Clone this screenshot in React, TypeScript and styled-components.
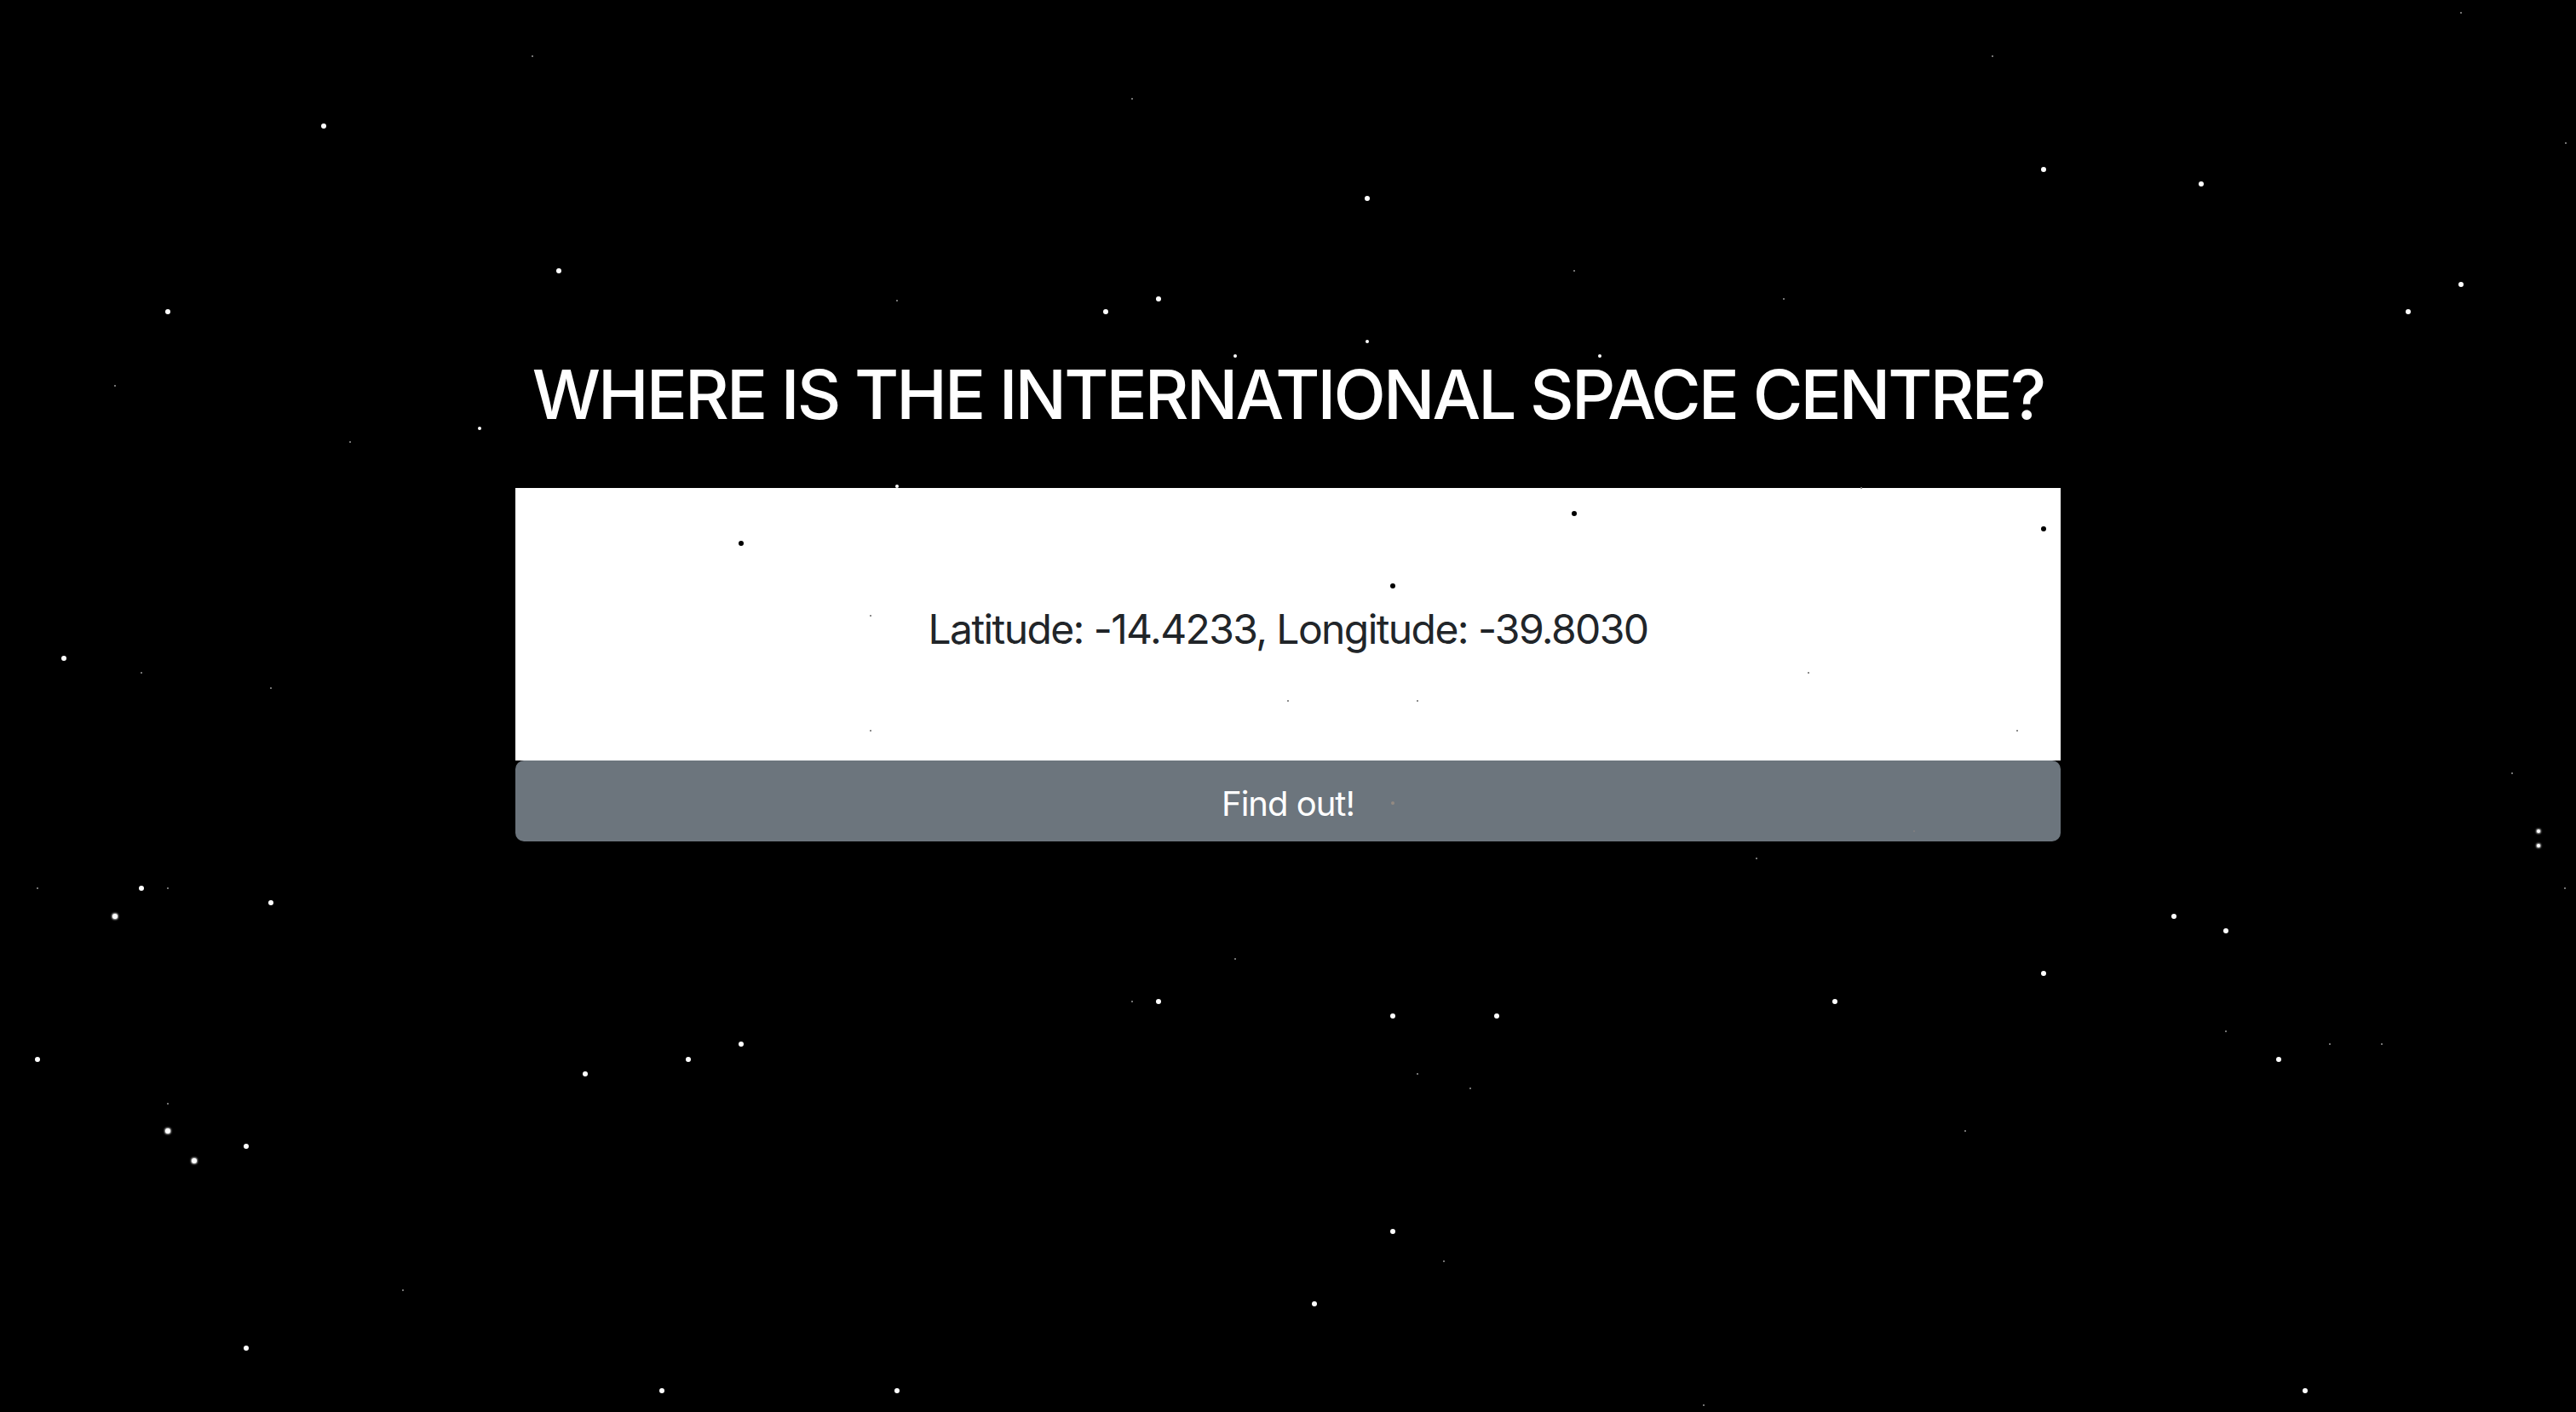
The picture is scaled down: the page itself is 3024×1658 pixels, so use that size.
import React from "react";
import styled, { createGlobalStyle } from "styled-components";

const GlobalStyle = createGlobalStyle`
  html, body {
    margin: 0;
    padding: 0;
    background: #000;
  }
  body {
    font-family: Inter, "Liberation Sans", Arial, sans-serif;
    -webkit-font-smoothing: antialiased;
  }
`;

const Page = styled.main`
  min-height: 100vh;
  box-sizing: border-box;
  display: flex;
  flex-direction: column;
  align-items: center;
  padding-top: 415px;
  background: #000;
`;

const Title = styled.h1`
  margin: 0 0 62px;
  font-size: 80px;
  line-height: 96px;
  font-weight: 500;
  color: #fff;
  text-align: center;
  letter-spacing: -2.9px;
`;

const Panel = styled.section`
  width: 60%;
  display: flex;
  flex-direction: column;
`;

const Card = styled.div`
  height: 320px;
  background: #fff;
  display: flex;
  align-items: center;
  justify-content: center;
`;

const Coordinates = styled.p`
  margin: 0;
  padding-top: 10px;
  font-size: 48px;
  font-weight: 400;
  color: #212529;
  letter-spacing: -1.6px;
`;

const FindButton = styled.button`
  height: 95px;
  padding: 6px 0 0;
  border: none;
  border-radius: 10px;
  background: #6c757d;
  color: #fff;
  font-family: inherit;
  font-size: 40px;
  font-weight: 400;
  letter-spacing: -1px;
  cursor: pointer;
`;

const Sky = styled.div`
  position: fixed;
  inset: 0;
  pointer-events: none;
  mix-blend-mode: difference;
  z-index: 2;
`;

type StarSize = "b" | "m" | "t";

const Star = styled.span<{ $size: StarSize; $soft?: boolean }>`
  position: absolute;
  border-radius: 50%;
  background: #fff;
  transform: translate(-50%, -50%);
  width: ${(p) => (p.$size === "b" ? 6 : p.$size === "m" ? 4 : 2)}px;
  height: ${(p) => (p.$size === "b" ? 6 : p.$size === "m" ? 4 : 2)}px;
  opacity: ${(p) => (p.$size === "t" ? 0.6 : 1)};
  box-shadow: ${(p) => (p.$soft ? "0 0 2px 1px rgba(255,255,255,0.7)" : "none")};
`;

// positions measured on a 1568 x 860 grid
const stars: [number, number, StarSize, boolean?][] = [
  [197, 77, "b"], [324, 34, "t"], [102, 190, "b"], [340, 165, "b"], [70, 235, "t"],
  [213, 269, "t"], [292, 261, "m"], [689, 60, "t"], [832, 121, "b"], [673, 190, "b"],
  [705, 182, "b"], [546, 183, "t"], [752, 217, "m"], [832, 208, "m"], [958, 165, "t"],
  [974, 217, "m"], [1086, 182, "t"], [1213, 34, "t"], [1244, 103, "b"], [1340, 112, "b"],
  [1498, 8, "t"], [1498, 173, "b"], [1466, 190, "b"], [1562, 87, "t"],
  [451, 331, "b"], [546, 296, "m"], [848, 357, "b"], [958, 313, "b"], [1244, 322, "b"],
  [530, 375, "t"], [1101, 410, "t"], [784, 427, "t"], [863, 427, "t"], [530, 445, "t"],
  [1228, 445, "t"], [1133, 297, "t"],
  [39, 401, "b"], [86, 410, "t"], [165, 419, "t"],
  [848, 489, "m"], [1165, 506, "t"], [1069, 523, "t"], [1529, 471, "t"],
  [1545, 506, "m", true], [1545, 515, "m", true], [1561, 541, "t"],
  [23, 541, "t"], [86, 541, "b"], [102, 541, "t"], [70, 558, "b", true], [165, 550, "b"],
  [752, 584, "t"], [689, 610, "t"], [705, 610, "b"], [848, 619, "b"], [911, 619, "b"],
  [1117, 610, "b"], [1244, 593, "b"], [1323, 558, "b"], [1355, 567, "b"], [1355, 628, "t"],
  [1387, 645, "b"], [1418, 636, "t"], [1450, 636, "t"],
  [23, 645, "b"], [356, 654, "b"], [419, 645, "b"], [451, 636, "b"],
  [863, 654, "t"], [895, 663, "t"], [102, 672, "t"], [102, 689, "b", true],
  [118, 707, "b", true], [150, 698, "b"], [1196, 689, "t"],
  [848, 750, "b"], [879, 768, "t"], [245, 786, "t"], [800, 794, "b"], [150, 821, "b"],
  [403, 847, "b"], [546, 847, "b"], [1403, 847, "b"], [1037, 856, "t"],
];

export default function App() {
  return (
    <>
      <GlobalStyle />
      <Page>
        <Title>WHERE IS THE INTERNATIONAL SPACE CENTRE?</Title>
        <Panel>
          <Card>
            <Coordinates>Latitude: -14.4233, Longitude: -39.8030</Coordinates>
          </Card>
          <FindButton type="button">Find out!</FindButton>
        </Panel>
      </Page>
      <Sky aria-hidden="true">
        {stars.map(([x, y, s, soft], i) => (
          <Star
            key={i}
            $size={s}
            $soft={soft}
            style={{ left: `${(x / 1568) * 100}%`, top: `${(y / 860) * 100}%` }}
          />
        ))}
      </Sky>
    </>
  );
}
